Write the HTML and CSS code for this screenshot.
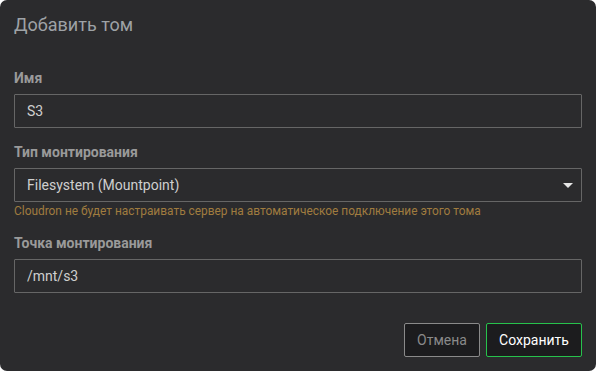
FILE: index.html
```html
<!DOCTYPE html>
<html lang="ru">
<head>
    <meta charset="UTF-8">
    <meta name="viewport" content="width=device-width, initial-scale=1.0">
    <title>Добавить том</title>
    <link rel="stylesheet" href="styles.css">
</head>
<body>
    <div class="modal">
        <h4 class="modal-title">Добавить том</h4>
        <form class="modal-body">
            <div class="form-group">
                <label for="name">Имя</label>
                <input type="text" id="name" value="S3">
            </div>
            <div class="form-group">
                <label for="mountType">Тип монтирования</label>
                <div class="select-wrap">
                    <select id="mountType">
                        <option>Filesystem (Mountpoint)</option>
                    </select>
                    <span class="caret"></span>
                </div>
                <p class="help-text">Cloudron не будет настраивать сервер на автоматическое подключение этого тома</p>
            </div>
            <div class="form-group">
                <label for="mountPoint">Точка монтирования</label>
                <input type="text" id="mountPoint" value="/mnt/s3">
            </div>
        </form>
        <div class="modal-footer">
            <button type="button" class="btn btn-cancel">Отмена</button>
            <button type="button" class="btn btn-save">Сохранить</button>
        </div>
    </div>
</body>
</html>
```

FILE: styles.css
```css
:root {
    --modal-bg: #2b2b2d;
    --field-bg: #2b2b2d;
    --field-border: #666666;
    --label-color: #9a9a9a;
    --text-color: #cfcfcf;
    --warn-color: #a07c3f;
    --green: #27c24c;
}

* {
    margin: 0;
    padding: 0;
    box-sizing: border-box;
    font-family: Roboto, 'Noto Sans', sans-serif;
}

body {
    background-color: #ffffff;
    width: 596px;
    height: 371px;
}

.modal {
    height: 371px;
    background-color: var(--modal-bg);
    border-radius: 7px;
    padding: 0 14px;
    display: flex;
    flex-direction: column;
}

.modal-title {
    font-size: 18px;
    font-weight: 400;
    line-height: 20px;
    color: #9ea2a6;
    padding-top: 15px;
    height: 69px;
}

.form-group {
    margin-bottom: 15px;
}

label {
    display: block;
    font-size: 14px;
    font-weight: 700;
    line-height: 18px;
    color: var(--label-color);
    margin-bottom: 7px;
}

input,
select {
    display: block;
    width: 100%;
    height: 34px;
    padding: 0 12px;
    background-color: var(--field-bg);
    border: 1px solid var(--field-border);
    border-radius: 1px;
    color: var(--text-color);
    font-size: 14px;
    outline: none;
}

select {
    appearance: none;
    -webkit-appearance: none;
}

.select-wrap {
    position: relative;
}

.caret {
    position: absolute;
    right: 9px;
    top: 15px;
    width: 0;
    height: 0;
    border-left: 5px solid transparent;
    border-right: 5px solid transparent;
    border-top: 5px solid #e6e6e6;
}

.help-text {
    font-size: 11.9px;
    line-height: 17px;
    color: var(--warn-color);
    margin-top: 1px;
    margin-bottom: -1px;
}

.modal-footer {
    display: flex;
    justify-content: flex-end;
    gap: 6px;
    margin-top: 15px;
}

.btn {
    height: 34px;
    padding: 0 12px;
    font-size: 14px;
    background-color: #1c1c1e;
    border-radius: 2px;
    cursor: pointer;
}

.btn-cancel {
    width: 76px;
    color: #8a8a8a;
    border: 1px solid #8a8a8a;
}

.btn-save {
    width: 96px;
    color: #ffffff;
    border: 1px solid var(--green);
}
```
